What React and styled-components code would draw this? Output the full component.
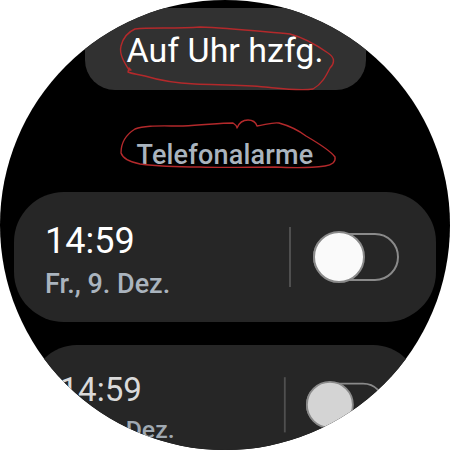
import React from "react";
import styled, { createGlobalStyle } from "styled-components";

const GlobalStyle = createGlobalStyle`
  html, body {
    margin: 0;
    padding: 0;
    background: #ffffff;
  }
  body {
    font-family: Roboto, "Noto Sans", sans-serif;
  }
`;

const Watch = styled.div`
  position: relative;
  width: 450px;
  height: 450px;
  border-radius: 50%;
  overflow: hidden;
  background: #000;
  display: flex;
  flex-direction: column;
  align-items: center;
`;

const TopButton = styled.div`
  margin-top: 8px;
  width: 281px;
  height: 82px;
  flex-shrink: 0;
  background: #313131;
  border-radius: 0 0 30px 30px;
  display: flex;
  align-items: center;
  justify-content: center;
  color: #fff;
  font-size: 34px;
  line-height: 1;
  padding-top: 2px;
  box-sizing: border-box;
`;

const Heading = styled.div`
  margin-top: 47px;
  height: 36px;
  color: #aab4be;
  font-size: 27px;
  font-weight: 500;
  line-height: 36px;
  letter-spacing: 0.2px;
`;

const List = styled.div`
  margin-top: 19px;
  width: 422px;
  display: flex;
  flex-direction: column;
  gap: 23px;
`;

const Card = styled.div`
  height: 130px;
  flex-shrink: 0;
  background: #262626;
  border-radius: 50px;
  display: flex;
  align-items: center;
  padding: 0 37px 0 31px;
  box-sizing: border-box;
  transform: scale(${(p) => p.$scale});
  transform-origin: top center;
`;

const Info = styled.div`
  flex: 1;
  display: flex;
  flex-direction: column;
  padding-top: 8px;
`;

const Time = styled.div`
  font-size: 36px;
  line-height: 40px;
  color: ${(p) => (p.$dim ? "#dadada" : "#ffffff")};
`;

const DateLine = styled.div`
  margin-top: 6px;
  font-size: 27px;
  font-weight: 500;
  line-height: 34px;
  color: ${(p) => (p.$dim ? "#a0a9b2" : "#aab4be")};
`;

const Divider = styled.div`
  width: 2px;
  height: 60px;
  background: #4f4f4f;
  margin-right: 22px;
`;

const Toggle = styled.div`
  position: relative;
  width: 86px;
  height: 52px;
  display: flex;
  align-items: center;
`;

const Track = styled.div`
  width: 86px;
  height: 48px;
  border-radius: 24px;
  border: 2px solid #8a8a8a;
  box-sizing: border-box;
`;

const Thumb = styled.div`
  position: absolute;
  left: 0;
  top: 0;
  width: 52px;
  height: 52px;
  border-radius: 50%;
  background: ${(p) => (p.$dim ? "#d4d4d4" : "#fafafa")};
  border: 2px solid #8a8a8a;
  box-sizing: border-box;
`;

const Scribble = styled.svg`
  position: absolute;
  left: 0;
  top: 0;
  pointer-events: none;
`;

const AlarmCard = ({ time, date, dim, scale }) => (
  <Card $scale={scale}>
    <Info>
      <Time $dim={dim}>{time}</Time>
      <DateLine $dim={dim}>{date}</DateLine>
    </Info>
    <Divider />
    <Toggle>
      <Track />
      <Thumb $dim={dim} />
    </Toggle>
  </Card>
);

const alarms = [
  { time: "14:59", date: "Fr., 9. Dez.", dim: false, scale: 1 },
  { time: "14:59", date: "Fr., 9. Dez.", dim: true, scale: 0.92 },
];

export default function App() {
  return (
    <>
      <GlobalStyle />
      <Watch>
        <TopButton>Auf Uhr hzfg.</TopButton>
        <Heading>Telefonalarme</Heading>
        <List>
          {alarms.map((a, i) => (
            <AlarmCard key={i} {...a} />
          ))}
        </List>
        <Scribble width="450" height="450" viewBox="0 0 450 450">
          <g fill="none" stroke="#b3292b" strokeWidth="1.4" strokeLinecap="round" strokeLinejoin="round">
            <path d="M129 70 C124 62 119 54 121 46 C123 38 128 32 135 29 C150 27 175 29 200 27 C230 28 265 32 290 34 C305 38 318 46 328 53 C336 58 334 64 330 68 C326 76 322 84 313 89 C300 91 285 89 265 87 C245 85 220 85 195 84 C175 83 158 80 145 76 C138 74 132 74 128 72 L129 68 L131 70 Z" />
            <path d="M121 153 C121 142 127 134 135 129 C145 125 160 126 183 126 C205 125 220 123 233 123 C236 125 237 127 237 128 C239 123 243 120 248 120 C253 120 256 123 257 126 C265 125 272 122 279 123 C290 126 298 130 306 136 C318 143 330 150 335 157 C336 162 332 165 325 166 C310 168 295 168 275 167 C250 167 225 168 200 167 C175 167 155 166 140 164 C130 162 123 159 121 153 Z" />
          </g>
        </Scribble>
      </Watch>
    </>
  );
}
